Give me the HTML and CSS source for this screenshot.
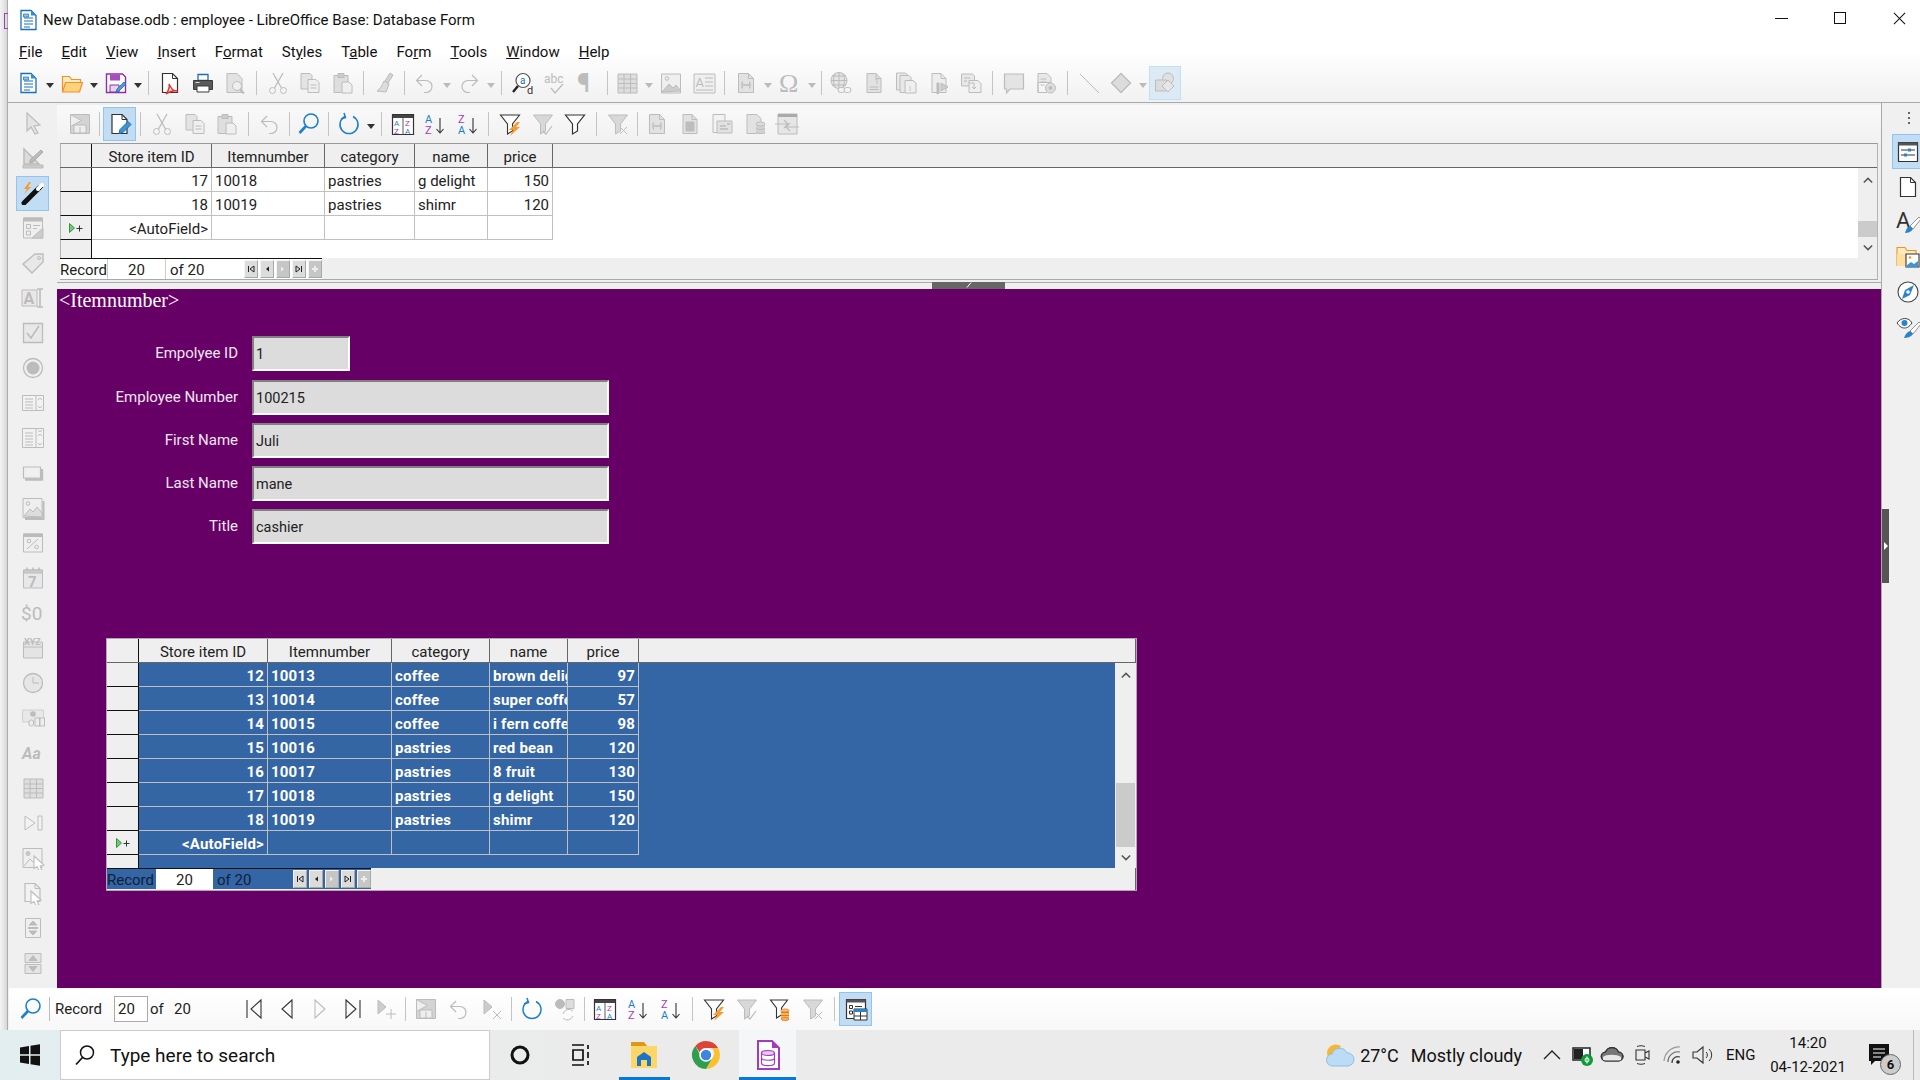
FILE: index.html
```html
<!DOCTYPE html>
<html lang="en">
<head>
  <meta charset="UTF-8" />
  <title>New Database.odb : employee - LibreOffice Base: Database Form</title>
  <link rel="stylesheet" href="styles.css">
</head>
<body>
  <svg class="sprite" xmlns="http://www.w3.org/2000/svg">
    <defs>
      <symbol id="i-new" viewBox="0 0 24 24"><path d="M5 2.500h10l5 5v14H5z" fill="#fff" stroke="#1b6fb5" stroke-width="1.3"/><path d="M15 2.500l5 5h-5z" fill="#2a8fd8" stroke="none"/><path d="M8 10h9M8 13h9M8 16h9M8 19h6" stroke="#1b6fb5"/><path d="M7.500 6h5v3h-5z" fill="#8fc4ee" stroke="#1b6fb5" stroke-width=".7"/></symbol>
      <symbol id="i-open" viewBox="0 0 24 24"><path d="M2.500 21V5.500h7l2 3h9V12" fill="#fdebc0" stroke="#f0922c" stroke-width="1.2"/><path d="M2.500 21l3-9.500h17l-3 9.500z" fill="#fdd27c" stroke="#f0922c" stroke-width="1.2"/></symbol>
      <symbol id="i-save" viewBox="0 0 24 24"><path d="M2.500 3h16l3 3v15.500h-19z" fill="#fff" stroke="#8e2ea8" stroke-width="1.4"/><path d="M6 3.500h10v6H6z" fill="#a84cc0" stroke="none"/><path d="M6 14h9v7H6z" fill="#e8d3ee" stroke="#8e2ea8"/><path d="M12 21l1-3 7-7 2 2-7 7z" fill="#4a9ad8" stroke="#1b6fb5" stroke-width=".8"/></symbol>
      <symbol id="i-pdf" viewBox="0 0 24 24"><path d="M4.500 2.500h10l5 5v14h-15z" fill="#fff" stroke="#333" stroke-width="1.2"/><path d="M14.500 2.500v5h5" stroke="#333"/><path d="M11 13c3 6 4 7 9 7-5-1-8 0-12 3 3-4 4-7 3-10z" fill="#fff" stroke="#e5322d" stroke-width="1.5"/></symbol>
      <symbol id="i-print" viewBox="0 0 24 24"><path d="M7 3.500h10v6H7z" fill="#fff" stroke="#1b6fb5" stroke-width="1.3"/><path d="M2.500 9.500h19v9h-19z" fill="#5a5a5a" stroke="#3a3a3a"/><path d="M6 15h12v6H6z" fill="#fff" stroke="#3a3a3a"/><path d="M4.500 11.500h4" stroke="#ddd"/></symbol>
      <symbol id="i-preview" viewBox="0 0 24 24"><path d="M4 2.500h10l5 5v14H4z" fill="#e2e2e2"/><circle cx="14" cy="15" r="4.500" fill="#eee"/><path d="M17 18.500l4 4" stroke-width="2"/></symbol>
      <symbol id="i-cut" viewBox="0 0 24 24"><path d="M7 2l8.500 15M17 2L8.500 17" stroke-width="1.3"/><circle cx="6.500" cy="19.500" r="3"/><circle cx="17.500" cy="19.500" r="3"/></symbol>
      <symbol id="i-copy" viewBox="0 0 24 24"><path d="M3 2.500h9l2 2V18H3z" fill="#e4e4e4"/><path d="M10 8.500h8l3 3v10H10z" fill="#efefef"/><path d="M12.500 14h6M12.500 17h6"/></symbol>
      <symbol id="i-paste" viewBox="0 0 24 24"><path d="M3 4.500h14v17H3z" fill="#dedede"/><path d="M7 2.500h6v4H7z" fill="#ccc"/><path d="M11 11h7l3 3v8H11z" fill="#efefef"/></symbol>
      <symbol id="i-clone" viewBox="0 0 24 24"><path d="M17 2l3 2-5 8-3-2z" fill="#d4d4d4"/><path d="M11 10l5 3-3 8-9-1c3-2 5-5 7-10z" fill="#dcdcdc"/></symbol>
      <symbol id="i-undo" viewBox="0 0 24 24"><path d="M9 4L3.500 9.500 9 15" stroke-width="1.2"/><path d="M4 9.500h9a6 6 0 0 1 0 12h-2" stroke-width="1.2"/></symbol>
      <symbol id="i-redo" viewBox="0 0 24 24"><path d="M15 4l5.500 5.500L15 15" stroke-width="1.2"/><path d="M20 9.500h-9a6 6 0 0 0 0 12h2" stroke-width="1.2"/></symbol>
      <symbol id="i-fr" viewBox="0 0 24 24"><circle cx="12" cy="9.500" r="7" fill="#fff" stroke="#555" stroke-width="1.2"/><path d="M7 15l-5 6" stroke="#222" stroke-width="2.400"/><text x="9" y="13" font-size="10" fill="#1b6fb5" stroke="none">a</text><text x="16" y="23" font-size="11" fill="#333" stroke="none">d</text></symbol>
      <symbol id="i-spell" viewBox="0 0 24 24"><text x="1" y="12" font-size="12" fill="currentColor" stroke="none">abc</text><path d="M8 17l4 5 8-9" stroke-width="1.300"/></symbol>
      <symbol id="i-para" viewBox="0 0 24 24"><text x="1" y="21" font-size="26" font-weight="bold" fill="currentColor" stroke="none">¶</text></symbol>
      <symbol id="i-table" viewBox="0 0 24 24"><path d="M3 3h19v19H3z" fill="#dedede"/><path d="M3 8h19M3 12.500h19M3 17h19M9 3v19M15.500 3v19"/></symbol>
      <symbol id="i-image" viewBox="0 0 24 24"><path d="M2.500 3h19v19h-19z" fill="#efefef"/><path d="M3 21l7-8 4 4 3-3 4 5v1z" fill="#ccc"/><circle cx="8" cy="7.500" r="1.800"/></symbol>
      <symbol id="i-text" viewBox="0 0 24 24"><path d="M2 3h21v19H2z" fill="#efefef"/><text x="3.500" y="16" font-size="13" fill="currentColor" stroke="none">A</text><path d="M13 7h8M13 11h8M13 15h8M4 19h17"/></symbol>
      <symbol id="i-field" viewBox="0 0 24 24"><path d="M4.500 2.500h10l5 5v14h-15z" fill="#e2e2e2"/><path d="M14.500 2.500v5h5"/><path d="M9 11c-1 0-1 1-1 3s0 3 1 3M15 11c1 0 1 1 1 3s0 3-1 3M9 14h6" stroke-width="1.400"/></symbol>
      <symbol id="i-omega" viewBox="0 0 24 24"><text x="1" y="21" font-size="26" fill="currentColor" stroke="none" font-family="Liberation Serif">Ω</text></symbol>
      <symbol id="i-link" viewBox="0 0 24 24"><circle cx="10" cy="9.500" r="8" fill="#e4e4e4"/><path d="M2 9.500h16M3 5h14M3 14h14M10 1.500v16M6 3c-2 4-2 9 0 13M14 3c2 4 2 9 0 13"/><rect x="9" y="16.500" width="7" height="5" rx="2.500" fill="#f4f4f4"/><rect x="15" y="16.500" width="7" height="5" rx="2.500" fill="#f4f4f4"/></symbol>
      <symbol id="i-foot" viewBox="0 0 24 24"><path d="M5 2.500h9l5 5v14H5z" fill="#e2e2e2"/><path d="M14 2.500v5h5M7.500 16h9M7.500 18.500h9"/><text x="12.500" y="13" font-size="8" fill="currentColor" stroke="none">1</text></symbol>
      <symbol id="i-end" viewBox="0 0 24 24"><path d="M2.500 2h9l2 2v15h-11z" fill="#e8e8e8"/><path d="M6 4.500h9l2 2v15H6z" fill="#e8e8e8"/><path d="M11 9.500h8l3 2.500v10H11z" fill="#efefef"/><text x="15" y="20" font-size="8" fill="currentColor" stroke="none">i</text></symbol>
      <symbol id="i-mark" viewBox="0 0 24 24"><path d="M5 2.500h9l5 5v14H5z" fill="#eee"/><path d="M14 2.500v5h5"/><path d="M10 12v11l2-1V12z" fill="#bbb"/><path d="M14 12l7 4-7 4z" fill="#ccc"/></symbol>
      <symbol id="i-xref" viewBox="0 0 24 24"><path d="M2.500 3h11l2 2v10h-13z" fill="#e8e8e8"/><path d="M10 9.500h9l3 3v9H10z" fill="#efefef"/><path d="M5 7h6M5 10h3M10 12h5v5M13 16l2 2 2-2"/></symbol>
      <symbol id="i-comment" viewBox="0 0 24 24"><path d="M2.500 3h19v15H8l-3.500 4v-4h-2z" fill="#e4e4e4" stroke-width="1.200"/></symbol>
      <symbol id="i-track" viewBox="0 0 24 24"><path d="M4 2.500h9l4 4v5H4v10" fill="#e8e8e8"/><path d="M4 2.500v19h9M6.500 8h6M6.500 11h6M6.500 14h4"/><circle cx="16.500" cy="17" r="5" fill="#ddd"/><circle cx="16.500" cy="17" r="1.500" fill="currentColor"/></symbol>
      <symbol id="i-line" viewBox="0 0 24 24"><path d="M3 3l19 19"/></symbol>
      <symbol id="i-diamond" viewBox="0 0 24 24"><path d="M12 2.500l9.500 9.500-9.500 9.500L2.500 12z" fill="#dcdcdc" stroke-width="1.300"/></symbol>
      <symbol id="i-shapes" viewBox="0 0 24 24"><circle cx="15" cy="7.500" r="5.500" fill="#e0e0e0"/><path d="M2.500 9h11v11h-11z" fill="#dcdcdc"/><path d="M15 9l6 6-6 6-6-6z" fill="#e6e6e6"/></symbol>

      <symbol id="i-savegrey" viewBox="0 0 24 24"><path d="M2.500 2.500h19v19h-19z" fill="#d4d4d4"/><path d="M6 13h12v8H6z" fill="#eee"/><path d="M2.500 2.500l11 6-11 6z" fill="#eee"/><path d="M12 15v6"/></symbol>
      <symbol id="i-edit" viewBox="0 0 24 24"><path d="M4 2.500h10l5 5v14H4z" fill="#fff" stroke="#333" stroke-width="1.200"/><path d="M14 2.500v5h5" stroke="#333"/><path d="M11 21.500l1-4 8-8 3 3-8 8z" fill="#3f94d8" stroke="#1b6fb5"/></symbol>
      <symbol id="i-find" viewBox="0 0 24 24"><circle cx="14" cy="9" r="7" stroke="#1b7fc9" stroke-width="1.600"/><path d="M9 14l-6.500 7" stroke="#1b7fc9" stroke-width="2.600"/></symbol>
      <symbol id="i-refresh" viewBox="0 0 24 24"><path d="M8 4.500a9 9 0 1 0 8 0" stroke="#1b7fc9" stroke-width="1.500"/><path d="M7 1l1.500 4.500L4 7" stroke="#1b7fc9" stroke-width="1.500"/></symbol>
      <symbol id="i-sortaz" viewBox="0 0 24 24"><path d="M1.500 2.500h21v20h-21z" fill="#fff" stroke="#333" stroke-width="1.200"/><path d="M2 3h20v3H2z" fill="#444" stroke="none"/><path d="M12 6v16" stroke="#333" stroke-width=".8"/><text x="3" y="14" font-size="8" fill="#1b7fc9" stroke="none">A</text><text x="3" y="21.500" font-size="8" fill="#a33bbf" stroke="none">Z</text><text x="14" y="14" font-size="8" fill="#a33bbf" stroke="none">Z</text><text x="14" y="21.500" font-size="8" fill="#1b7fc9" stroke="none">A</text></symbol>
      <symbol id="i-asc" viewBox="0 0 24 24"><text x="2" y="10.500" font-size="11" fill="#1b7fc9" stroke="none">A</text><text x="2" y="22" font-size="11" fill="#a33bbf" stroke="none">Z</text><path d="M17 6v15M13.500 17l3.500 4 3.500-4" stroke="#333" stroke-width="1.100"/></symbol>
      <symbol id="i-desc" viewBox="0 0 24 24"><text x="2" y="10.500" font-size="11" fill="#a33bbf" stroke="none">Z</text><text x="2" y="22" font-size="11" fill="#1b7fc9" stroke="none">A</text><path d="M17 6v15M13.500 17l3.500 4 3.500-4" stroke="#333" stroke-width="1.100"/></symbol>
      <symbol id="i-fauto" viewBox="0 0 24 24"><path d="M2.500 3h19l-7 9v7l-5 3V12z" fill="#fff" stroke="#333" stroke-width="1.100"/><path d="M19 10l-8 8h4l-3 6 10-9h-4l4-5z" fill="#f39c33" stroke="none"/></symbol>
      <symbol id="i-fapply" viewBox="0 0 24 24"><path d="M2.500 3h19l-7 9v7l-5 3V12z" fill="#d8d8d8"/><path d="M12 19l3 3 6-8" stroke-width="1.200"/></symbol>
      <symbol id="i-fform" viewBox="0 0 24 24"><path d="M2.500 3h19l-7 9v7l-5 3V12z" fill="#fff" stroke="#333" stroke-width="1.200"/></symbol>
      <symbol id="i-fremove" viewBox="0 0 24 24"><path d="M2.500 3h19l-7 9v7l-5 3V12z" fill="#d8d8d8"/><path d="M14 15l7 7M21 15l-7 7"/></symbol>
      <symbol id="i-fdb" viewBox="0 0 24 24"><path d="M2.500 3h17l-6 8v7l-5 3V11z" fill="#fff" stroke="#333" stroke-width="1.100"/><path d="M13 13h8v9h-8z" fill="#f8b560" stroke="none"/><path d="M13 15.500h8M13 18.500h8" stroke="#e07a1a"/><ellipse cx="17" cy="13.500" rx="4" ry="1.500" fill="#f8c57c" stroke="#e07a1a" stroke-width=".8"/><ellipse cx="17" cy="22" rx="4" ry="1.500" fill="#f8b560" stroke="#e07a1a" stroke-width=".8"/></symbol>
      <symbol id="i-frame" viewBox="0 0 24 24"><path d="M5 2.500h9l5 5v14H5z" fill="#e2e2e2"/><path d="M14 2.500v5h5"/><path d="M8 10h8v9H8z" fill="#bdbdbd"/></symbol>
      <symbol id="i-mail" viewBox="0 0 24 24"><path d="M3 2.500h12v18H3z" fill="#f2f2f2"/><path d="M7 9h15v12H7z" fill="#e2e2e2"/><path d="M10 14h6M10 17h8M17 12h3" stroke-width="1.300"/></symbol>
      <symbol id="i-dbdoc" viewBox="0 0 24 24"><path d="M4 2.500h10l4 4v15H4z" fill="#e2e2e2"/><path d="M13 12h9v10h-9z" fill="#d2d2d2" stroke="none"/><ellipse cx="17.500" cy="12" rx="4.500" ry="2" fill="#ddd"/><path d="M13 16c1 2 8 2 9 0M13 20c1 2 8 2 9 0"/></symbol>
      <symbol id="i-arrows" viewBox="0 0 24 24"><path d="M3 2h19v20H3z" fill="#e6e6e6"/><path d="M3 2h19v3H3z" fill="#aaa" stroke="none"/><path d="M0 12h13M9 8l4 4-4 4M24 15H11M15 11l-4 4 4 4" stroke-width="1.100"/></symbol>

      <symbol id="i-cursor" viewBox="0 0 24 24"><path d="M6 2l13 12-6 1 4 7-3 1-4-7-4 4z" fill="#e4e4e4" stroke-width="1.200"/></symbol>
      <symbol id="i-square" viewBox="0 0 24 24"><path d="M3 3v15l15 0z" fill="#dcdcdc" stroke-width="1.500"/><path d="M2 19h20v3H2z" fill="#ccc"/><path d="M9 14L20 4l2 2-10 10-3 1z" fill="#bbb" stroke="#aaa"/></symbol>
      <symbol id="i-wand" viewBox="0 0 24 24"><path d="M3 22l15-15" stroke="#111" stroke-width="5" stroke-linecap="round"/><path d="M17 8l4-4" stroke="#fff" stroke-width="4" stroke-linecap="round"/><path d="M19 9l3-3" stroke="#222" stroke-width="1"/><path d="M8 1L3 8h3l-3 5 7-7H7l3-5z" fill="#f39c33" stroke="none"/></symbol>
      <symbol id="i-fprops" viewBox="0 0 24 24"><path d="M2.500 2h19v20h-19z" fill="#efefef"/><path d="M2.500 2h19v3h-19z" fill="#bbb"/><path d="M5.500 8.500h4v4h-4zM5.500 15h4v4h-4zM12 9.500h7M12 12.500h4"/><path d="M22 12v10H11z" fill="#ccc"/></symbol>
      <symbol id="i-tag" viewBox="0 0 24 24"><path d="M2 13L14 3h8v8L11 22z" fill="#e8e8e8" stroke-width="1.400"/><circle cx="18" cy="7" r="1.500"/></symbol>
      <symbol id="i-label" viewBox="0 0 24 24"><path d="M1 4h15v16H1z" fill="#e8e8e8"/><text x="2.500" y="18" font-size="16" font-weight="bold" fill="currentColor" stroke="none">A</text><path d="M16 3h6M16 21h6M19 3v18" stroke-width="1.600"/></symbol>
      <symbol id="i-check" viewBox="0 0 24 24"><path d="M2.500 2.500h19v19h-19z" fill="#e8e8e8" stroke-width="1.300"/><path d="M6 12l4 5 8-12" stroke-width="1.600"/></symbol>
      <symbol id="i-radio" viewBox="0 0 24 24"><circle cx="12" cy="12" r="9.500" fill="#efefef" stroke-width="1.300"/><circle cx="12" cy="12" r="6.500" fill="currentColor" stroke="none"/></symbol>
      <symbol id="i-list" viewBox="0 0 24 24"><path d="M1.500 4.500h21v15h-21z" fill="#f2f2f2"/><path d="M15 4.500v15M4 8h8M4 11h8M4 14h8M4 17h8M17 9l2-2 2 2M17 15l2 2 2-2"/></symbol>
      <symbol id="i-combo" viewBox="0 0 24 24"><path d="M1.500 2.500h21v19h-21z" fill="#f2f2f2"/><path d="M15 2.500v19M4 7h8M4 10h8M4 13h8M4 16h8M4 19h8M17 4l2 2 2-2M17 10l2-2 2 2M17 17l2 2 2-2"/></symbol>
      <symbol id="i-button" viewBox="0 0 24 24"><path d="M2.500 6h17v11h-17z" fill="#f0f0f0" stroke-width="1.200"/><path d="M4 18.500h17V8" stroke-width="2.400"/></symbol>
      <symbol id="i-imgbtn" viewBox="0 0 24 24"><path d="M2 2.500h19v19H2z" fill="#efefef"/><path d="M3 20l6-7 3 3 4-5 5 6v4z" fill="#ddd"/><circle cx="7" cy="7.500" r="1.800"/><path d="M22.500 5v18H4" stroke-width="2"/></symbol>
      <symbol id="i-percent" viewBox="0 0 24 24"><path d="M2.500 3h19v18h-19z" fill="#efefef"/><path d="M2.500 3h19v2.500h-19z" fill="#bbb"/><path d="M6 18L17 8"/><circle cx="8" cy="10" r="1.800"/><circle cx="15.500" cy="16" r="1.800"/></symbol>
      <symbol id="i-date" viewBox="0 0 24 24"><path d="M2.500 4h19v18h-19z" fill="#e8e8e8"/><path d="M2.500 4h19v3h-19z" fill="#ccc"/><path d="M6 1.500v3M18 1.500v3M12 1.500v3" stroke-width="1.500"/><text x="7" y="20.500" font-size="15" font-weight="bold" fill="currentColor" stroke="none">7</text></symbol>
      <symbol id="i-dollar" viewBox="0 0 24 24"><text x="0" y="19" font-size="19" fill="currentColor" stroke="none">$0</text></symbol>
      <symbol id="i-xyz" viewBox="0 0 24 24"><path d="M2.500 6h19v16h-19z" fill="#e4e4e4"/><path d="M2.500 11h19"/><text x="3" y="9" font-size="9" font-weight="bold" fill="currentColor" stroke="none">XYZ</text></symbol>
      <symbol id="i-clock" viewBox="0 0 24 24"><circle cx="12" cy="12" r="9.500" fill="#e6e6e6" stroke-width="1.300"/><path d="M12 6v6h6"/></symbol>
      <symbol id="i-money" viewBox="0 0 24 24"><path d="M1.500 4h21v12h-21z" fill="#e8e8e8" stroke="#d0d0d0"/><circle cx="12" cy="8" r="2.800" fill="currentColor" stroke="none"/><rect x="8" y="14" width="4.500" height="6" rx="2" fill="#eee"/><rect x="14" y="12" width="4.500" height="8" fill="#eee"/><rect x="19" y="12" width="4.500" height="8" fill="#eee"/></symbol>
      <symbol id="i-aa" viewBox="0 0 24 24"><text x="1" y="18" font-size="16" font-style="italic" font-weight="bold" fill="currentColor" stroke="none">Aa</text></symbol>
      <symbol id="i-next" viewBox="0 0 24 24"><path d="M4 5l10 7-10 7zM17 5h4v14h-4z" fill="#f2f2f2"/></symbol>
      <symbol id="i-imgptr" viewBox="0 0 24 24"><path d="M2 2.500h19v19H2z" fill="#efefef"/><path d="M3 20l6-7 3 3 4-4" fill="none"/><circle cx="7" cy="7.500" r="2" fill="#ccc"/><path d="M13 10l10 9-4 1 2 4-3 .5-2-4-3 2z" fill="#fff" stroke-width="1.100"/></symbol>
      <symbol id="i-docptr" viewBox="0 0 24 24"><path d="M4 2.500h10l5 5v13H4z" fill="#f2f2f2" stroke-width="1.200"/><path d="M14 2.500v5h5"/><path d="M10 10l10 9-4 1 2 4-3 .5-2-4-3 2z" fill="#fff" stroke-width="1.100"/></symbol>
      <symbol id="i-spin" viewBox="0 0 24 24"><path d="M4.500 2.500h15v19h-15z" fill="#efefef"/><path d="M8 9l4-4 4 4zM8 15l4 4 4-4z" fill="currentColor"/><path d="M7 11.500h10M7 12.500h10"/></symbol>
      <symbol id="i-scroll" viewBox="0 0 24 24"><path d="M4 2.500h16v9H4zM4 13.500h16v9H4z" fill="#e4e4e4"/><path d="M8 9.500l4-5 4 5zM8 15.500l4 5 4-5z" fill="currentColor"/></symbol>

      <symbol id="i-props" viewBox="0 0 24 24"><path d="M2.500 2.500h19v19h-19z" fill="#fff" stroke="#333" stroke-width="1.200"/><path d="M2.500 2.500h19v3h-19z" fill="#555" stroke="none"/><path d="M5 10h14M5 15h14" stroke="#333"/><path d="M12 8.500h3v3h-3zM8 13.500h3v3H8z" fill="#2a84cc" stroke="none"/></symbol>
      <symbol id="i-page" viewBox="0 0 24 24"><path d="M4.500 2.500h10l5 5v14h-15z" fill="#fff" stroke="#333" stroke-width="1.200"/><path d="M14.500 2.500v5h5" stroke="#333"/></symbol>
      <symbol id="i-style" viewBox="0 0 24 24"><text x="0" y="18" font-size="22" fill="#333" stroke="none">A</text><path d="M14 16L23 7l2 2-8 10z" fill="#fff" stroke="#777" stroke-width=".8"/><path d="M9 23c3 0 6-1 8-4l-3-3c-3 1-4 4-5 7z" fill="#2a84cc" stroke="none"/></symbol>
      <symbol id="i-gallery" viewBox="0 0 24 24"><path d="M1 21V2.500h8l2 3h9V9" fill="#fdebc0" stroke="#f0922c" stroke-width="1.100"/><path d="M1 21V9h10v12z" fill="#fde0a0" stroke="none"/><path d="M10 9h13v13H10z" fill="#fff" stroke="#333" stroke-width="1.100"/><path d="M10 21l5-4 3 2 4-3v6H10z" fill="#3f94d8" stroke="none"/><circle cx="14" cy="12.500" r="1.300" fill="#f0922c" stroke="none"/></symbol>
      <symbol id="i-nav" viewBox="0 0 24 24"><circle cx="12" cy="12" r="10" fill="#fff" stroke="#444" stroke-width="1.100"/><path d="M18 5l-4 10-8 4 3-9z" fill="#2a84cc" stroke="none"/><circle cx="12" cy="12" r="1.800" fill="#fff" stroke="none"/></symbol>
      <symbol id="i-inspect" viewBox="0 0 24 24"><path d="M1 8c4-6 12-6 15 0-3 4-5 5-7.500 5S4 12 1 8z" fill="#fff" stroke="#444"/><circle cx="8.500" cy="8" r="3" fill="#2a84cc" stroke="none"/><path d="M14 16l9-9 2 2-8 10z" fill="#fff" stroke="#777" stroke-width=".8"/><path d="M8 23c3 0 7-1 9-4l-3-3c-3 1-5 4-6 7z" fill="#2a84cc" stroke="none"/></symbol>

      <symbol id="i-first" viewBox="0 0 24 24"><path d="M5 3v18M19 3L9 12l10 9z" stroke="#333" stroke-width="1.100"/></symbol>
      <symbol id="i-prev" viewBox="0 0 24 24"><path d="M17 3L7 12l10 9z" stroke="#333" stroke-width="1.100"/></symbol>
      <symbol id="i-nxt" viewBox="0 0 24 24"><path d="M7 3l10 9-10 9z" stroke-width="1.100"/></symbol>
      <symbol id="i-last" viewBox="0 0 24 24"><path d="M19 3v18M5 3l10 9-10 9z" stroke="#333" stroke-width="1.100"/></symbol>
      <symbol id="i-addrec" viewBox="0 0 24 24"><path d="M4 3l8 7-8 7z" fill="#ccc"/><path d="M17 12v10M12 17h10"/></symbol>
      <symbol id="i-delrec" viewBox="0 0 24 24"><path d="M4 3l8 7-8 7z" fill="#ccc"/><path d="M13 14l8 8M21 14l-8 8"/></symbol>
      <symbol id="i-reset" viewBox="0 0 24 24"><circle cx="7" cy="7" r="4.500" fill="#bbb"/><path d="M13 2.500h8v9h-8z" fill="#ddd"/><path d="M10 17a6 6 0 0 1 10-3M20 19a6 6 0 0 1-10 2"/></symbol>
      <symbol id="i-fview" viewBox="0 0 24 24"><path d="M2.500 2.500h19v19h-19z" fill="#fff" stroke="#333" stroke-width="1.200"/><path d="M2.500 2.500h19v3h-19z" fill="#555" stroke="none"/><path d="M5.500 8.500h3v3h-3zM5.500 14h3v3h-3zM11 9.500h7" stroke="#333"/><path d="M10 12h13v11H10z" fill="#fff" stroke="#333"/><path d="M10 12h13v3H10z" fill="#2a84cc" stroke="none"/><path d="M10 19h13M16.500 15v8" stroke="#333"/></symbol>
      <symbol id="i-rowadd" viewBox="0 0 16 12"><path d="M1.500 1.500l5 4.500-5 4.500z" fill="#7bc47f" stroke="#2d9a3a"/><path d="M11.500 3.500v6M8.500 6.500h6" stroke="#333"/></symbol>
      <symbol id="i-chevup" viewBox="0 0 12 8"><path d="M1 6.500l5-5 5 5" stroke="#555" stroke-width="1.800"/></symbol>
      <symbol id="i-chevdn" viewBox="0 0 12 8"><path d="M1 1.500l5 5 5-5" stroke="#555" stroke-width="1.800"/></symbol>

      <symbol id="i-ring" viewBox="0 0 24 24"><circle cx="12" cy="12" r="8" stroke="#111" stroke-width="3"/></symbol>
      <symbol id="i-tasks" viewBox="0 0 24 24"><path d="M4 2h12M4 22h12M5 7h10v10H5zM20 2v4M20 9v6M20 18v4" stroke="#111" stroke-width="1.700"/></symbol>
      <symbol id="i-win" viewBox="0 0 24 24"><path d="M2 4.500l9-1.500v8.300H2zM12.500 2.800L22 1.300v10h-9.500zM2 12.700h9V21l-9-1.400zM12.500 12.700H22v10l-9.500-1.500z" fill="#111" stroke="none"/></symbol>
      <symbol id="i-search" viewBox="0 0 24 24"><circle cx="14" cy="9.500" r="6.500" stroke="#111" stroke-width="1.500"/><path d="M9.500 14.500l-6.500 7" stroke="#111" stroke-width="1.700"/></symbol>
      <symbol id="i-explorer" viewBox="0 0 32 32"><path d="M3 3h13l3 4h10v22H3z" fill="#fcd767" stroke="none"/><path d="M3 3h13l3 4H3z" fill="#d99a1c" stroke="none"/><path d="M9 27V18l7-5 7 5v9h-4v-6h-6v6z" fill="#1b74c4" stroke="none"/></symbol>
      <symbol id="i-chrome" viewBox="0 0 32 32"><path d="M16 2a14 14 0 0 1 12.100 7H16a7 7 0 0 0-6.400 4.300L5.400 6.900A14 14 0 0 1 16 2z" fill="#dd4437" stroke="none"/><path d="M28.100 9A14 14 0 0 1 16 30l6-10.500A7 7 0 0 0 21.800 9z" fill="#fbc02d" stroke="none"/><path d="M16 30A14 14 0 0 1 5.400 6.900l5.800 11.200A7 7 0 0 0 22 19.500z" fill="#2e9e4f" stroke="none"/><circle cx="16" cy="16" r="6" fill="#3d85e0" stroke="#fff" stroke-width="1.600"/></symbol>
      <symbol id="i-base" viewBox="0 0 32 32"><path d="M6 2h14l7 7v21H6z" fill="#fff" stroke="#a33bbf" stroke-width="2"/><path d="M20 2l7 7h-7z" fill="#a33bbf" stroke="none"/><ellipse cx="16" cy="14" rx="6.500" ry="2.500" fill="#e6c7ef" stroke="#a33bbf" stroke-width="1.200"/><path d="M9.500 14v10c0 3.500 13 3.500 13 0V14M9.500 19c0 3 13 3 13 0" stroke="#a33bbf" stroke-width="1.200"/></symbol>
      <symbol id="i-weather" viewBox="0 0 32 32"><path d="M3 14a9 9 0 0 1 14-7l-8 12H4z" fill="#f7b733" stroke="none"/><path d="M9 27a6 6 0 0 1-1-12 8 8 0 0 1 15-1 6.500 6.500 0 0 1 1 13z" fill="#bcdcf5" stroke="#8bbfe6"/></symbol>
      <symbol id="i-caret" viewBox="0 0 24 24"><path d="M4 16l8-8 8 8" stroke="#222" stroke-width="1.300"/></symbol>
      <symbol id="i-batt" viewBox="0 0 24 24"><path d="M3 5h17v12H3z" fill="#fff" stroke="#222" stroke-width="1.500"/><path d="M4 6h9v10H4z" fill="#222" stroke="none"/><circle cx="17" cy="17" r="6" fill="#0e9b38" stroke="none"/><path d="M17 13.500v7M15 17a2 2 0 0 1 4 0 2 2 0 0 1-4 0z" stroke="#fff" stroke-width="1"/></symbol>
      <symbol id="i-cloud" viewBox="0 0 24 24"><path d="M6 18a4.500 4.500 0 0 1-.5-9 7 7 0 0 1 13 0 4.500 4.500 0 0 1 0 9z" fill="#777" stroke="#333"/><path d="M3 14c3-3 14-3 18 0v4H3z" fill="#e8e8e8" stroke="none"/><path d="M6 18a4.500 4.500 0 0 1-.5-9 7 7 0 0 1 13 0 4.500 4.500 0 0 1 0 9z" stroke="#333" stroke-width="1.200"/></symbol>
      <symbol id="i-cam" viewBox="0 0 24 24"><path d="M6 7h9v10H6zM15 10l4-2v8l-4-2z" stroke="#333" stroke-width="1.100"/><path d="M7 3.500c3-1 5-1 8 0M7 20.500c3 1 5 1 8 0" stroke="#333"/></symbol>
      <symbol id="i-wifi" viewBox="0 0 24 24"><path d="M4 18A15 15 0 0 1 20 4" stroke="#999" stroke-width="1.200"/><path d="M8 19a10 10 0 0 1 12-10" stroke="#666" stroke-width="1.200"/><path d="M12 20a6 6 0 0 1 8-6" stroke="#444" stroke-width="1.200"/><circle cx="18" cy="19" r="1.800" fill="#222" stroke="none"/></symbol>
      <symbol id="i-vol" viewBox="0 0 24 24"><path d="M3 9h4l6-5v16l-6-5H3z" stroke="#333" stroke-width="1.100"/><path d="M16 9a4 4 0 0 1 0 6M19 6a8 8 0 0 1 0 12" stroke="#333"/></symbol>
      <symbol id="i-note" viewBox="0 0 24 24"><path d="M2 1h20v17H8l-4 4v-4H2z" fill="#111" stroke="none"/><path d="M6 6h12M6 10h12M6 14h8" stroke="#fff"/></symbol>
    </defs>
  </svg>

  <div class="behind"><span class="behind-glyph"></span></div>

  <div class="window">
    <div class="head">
      <div class="titlebar">
        <svg class="ic app-ic"><use href="#i-new"/></svg>
        <span class="title">New Database.odb : employee - LibreOffice Base: Database Form</span>
        <div class="winbtns">
          <span class="wb wb-min"></span>
          <span class="wb wb-max"></span>
          <svg class="wb-close" viewBox="0 0 14 14"><path d="M1 1l12 12M13 1L1 13" stroke="#111" stroke-width="1.100"/></svg>
        </div>
      </div>
      <div class="menubar">
        <span><u>F</u>ile</span><span><u>E</u>dit</span><span><u>V</u>iew</span><span><u>I</u>nsert</span><span>F<u>o</u>rmat</span><span>St<u>y</u>les</span><span>T<u>a</u>ble</span><span>Fo<u>r</u>m</span><span><u>T</u>ools</span><span><u>W</u>indow</span><span><u>H</u>elp</span>
      </div>
      <div class="toolbar tb-main">
        <span class="btn"><svg class="ic"><use href="#i-new"/></svg></span><span class="dd on"></span>
        <span class="btn"><svg class="ic"><use href="#i-open"/></svg></span><span class="dd on"></span>
        <span class="btn"><svg class="ic"><use href="#i-save"/></svg></span><span class="dd on"></span>
        <span class="sep wide"></span>
        <span class="btn"><svg class="ic"><use href="#i-pdf"/></svg></span>
        <span class="btn"><svg class="ic"><use href="#i-print"/></svg></span>
        <span class="btn"><svg class="ic"><use href="#i-preview"/></svg></span>
        <span class="sep wide"></span>
        <span class="btn"><svg class="ic"><use href="#i-cut"/></svg></span>
        <span class="btn"><svg class="ic"><use href="#i-copy"/></svg></span>
        <span class="btn"><svg class="ic"><use href="#i-paste"/></svg></span>
        <span class="sep wide"></span>
        <span class="btn"><svg class="ic"><use href="#i-clone"/></svg></span>
        <span class="sep"></span>
        <span class="btn"><svg class="ic"><use href="#i-undo"/></svg></span><span class="dd"></span>
        <span class="btn"><svg class="ic"><use href="#i-redo"/></svg></span><span class="dd"></span>
        <span class="sep wide"></span>
        <span class="btn"><svg class="ic"><use href="#i-fr"/></svg></span>
        <span class="btn"><svg class="ic"><use href="#i-spell"/></svg></span>
        <span class="btn"><svg class="ic"><use href="#i-para"/></svg></span>
        <span class="sep"></span>
        <span class="btn"><svg class="ic"><use href="#i-table"/></svg></span><span class="dd"></span>
        <span class="btn"><svg class="ic"><use href="#i-image"/></svg></span>
        <span class="btn"><svg class="ic"><use href="#i-text"/></svg></span>
        <span class="sep wide"></span>
        <span class="btn"><svg class="ic"><use href="#i-field"/></svg></span><span class="dd"></span>
        <span class="btn"><svg class="ic"><use href="#i-omega"/></svg></span><span class="dd"></span>
        <span class="sep"></span>
        <span class="btn"><svg class="ic"><use href="#i-link"/></svg></span>
        <span class="btn"><svg class="ic"><use href="#i-foot"/></svg></span>
        <span class="btn"><svg class="ic"><use href="#i-end"/></svg></span>
        <span class="btn"><svg class="ic"><use href="#i-mark"/></svg></span>
        <span class="btn"><svg class="ic"><use href="#i-xref"/></svg></span>
        <span class="sep wide"></span>
        <span class="btn"><svg class="ic"><use href="#i-comment"/></svg></span>
        <span class="btn"><svg class="ic"><use href="#i-track"/></svg></span>
        <span class="sep wide"></span>
        <span class="btn"><svg class="ic"><use href="#i-line"/></svg></span>
        <span class="btn"><svg class="ic"><use href="#i-diamond"/></svg></span><span class="dd"></span>
        <span class="btn hl-soft"><svg class="ic"><use href="#i-shapes"/></svg></span>
      </div>
    </div>

    <div class="middle">
      <div class="leftbar">
        <span class="side"><svg class="ic"><use href="#i-cursor"/></svg></span>
        <span class="side"><svg class="ic"><use href="#i-square"/></svg></span>
        <span class="side hl"><svg class="ic"><use href="#i-wand"/></svg></span>
        <span class="side"><svg class="ic"><use href="#i-fprops"/></svg></span>
        <span class="side"><svg class="ic"><use href="#i-tag"/></svg></span>
        <span class="side"><svg class="ic"><use href="#i-label"/></svg></span>
        <span class="side"><svg class="ic"><use href="#i-check"/></svg></span>
        <span class="side"><svg class="ic"><use href="#i-radio"/></svg></span>
        <span class="side"><svg class="ic"><use href="#i-list"/></svg></span>
        <span class="side"><svg class="ic"><use href="#i-combo"/></svg></span>
        <span class="side"><svg class="ic"><use href="#i-button"/></svg></span>
        <span class="side"><svg class="ic"><use href="#i-imgbtn"/></svg></span>
        <span class="side"><svg class="ic"><use href="#i-percent"/></svg></span>
        <span class="side"><svg class="ic"><use href="#i-date"/></svg></span>
        <span class="side"><svg class="ic"><use href="#i-dollar"/></svg></span>
        <span class="side"><svg class="ic"><use href="#i-xyz"/></svg></span>
        <span class="side"><svg class="ic"><use href="#i-clock"/></svg></span>
        <span class="side"><svg class="ic"><use href="#i-money"/></svg></span>
        <span class="side"><svg class="ic"><use href="#i-aa"/></svg></span>
        <span class="side"><svg class="ic"><use href="#i-table"/></svg></span>
        <span class="side"><svg class="ic"><use href="#i-next"/></svg></span>
        <span class="side"><svg class="ic"><use href="#i-imgptr"/></svg></span>
        <span class="side"><svg class="ic"><use href="#i-docptr"/></svg></span>
        <span class="side"><svg class="ic"><use href="#i-spin"/></svg></span>
        <span class="side"><svg class="ic"><use href="#i-scroll"/></svg></span>
      </div>

      <div class="content">
        <div class="toolbar tb-form">
          <span class="btn"><svg class="ic"><use href="#i-savegrey"/></svg></span>
          <span class="sep"></span>
          <span class="btn hl"><svg class="ic"><use href="#i-edit"/></svg></span>
          <span class="sep wide"></span>
          <span class="btn"><svg class="ic"><use href="#i-cut"/></svg></span>
          <span class="btn"><svg class="ic"><use href="#i-copy"/></svg></span>
          <span class="btn"><svg class="ic"><use href="#i-paste"/></svg></span>
          <span class="sep wide"></span>
          <span class="btn"><svg class="ic"><use href="#i-undo"/></svg></span>
          <span class="sep"></span>
          <span class="btn"><svg class="ic"><use href="#i-find"/></svg></span>
          <span class="sep"></span>
          <span class="btn"><svg class="ic"><use href="#i-refresh"/></svg></span><span class="dd on"></span>
          <span class="sep wide"></span>
          <span class="btn"><svg class="ic"><use href="#i-sortaz"/></svg></span>
          <span class="btn"><svg class="ic"><use href="#i-asc"/></svg></span>
          <span class="btn"><svg class="ic"><use href="#i-desc"/></svg></span>
          <span class="sep wide"></span>
          <span class="btn"><svg class="ic"><use href="#i-fauto"/></svg></span>
          <span class="btn"><svg class="ic"><use href="#i-fapply"/></svg></span>
          <span class="btn"><svg class="ic"><use href="#i-fform"/></svg></span>
          <span class="sep wide"></span>
          <span class="btn"><svg class="ic"><use href="#i-fremove"/></svg></span>
          <span class="sep"></span>
          <span class="btn"><svg class="ic"><use href="#i-field"/></svg></span>
          <span class="btn"><svg class="ic"><use href="#i-frame"/></svg></span>
          <span class="btn"><svg class="ic"><use href="#i-mail"/></svg></span>
          <span class="btn"><svg class="ic"><use href="#i-dbdoc"/></svg></span>
          <span class="btn"><svg class="ic"><use href="#i-arrows"/></svg></span>
        </div>

        <div class="grid grid-top">
          <div class="ghead">
            <span class="rh"></span><span class="th c1">Store item ID</span><span class="th c2">Itemnumber</span><span class="th c3">category</span><span class="th c4">name</span><span class="th c5">price</span>
          </div>
          <div class="gbody">
            <div class="grows">
              <div class="grow"><span class="rh"></span><span class="td c1 num">17</span><span class="td c2">10018</span><span class="td c3">pastries</span><span class="td c4">g delight</span><span class="td c5 num">150</span></div>
              <div class="grow"><span class="rh"></span><span class="td c1 num">18</span><span class="td c2">10019</span><span class="td c3">pastries</span><span class="td c4">shimr</span><span class="td c5 num">120</span></div>
              <div class="grow"><span class="rh"><svg class="rowadd"><use href="#i-rowadd"/></svg></span><span class="td c1 num">&lt;AutoField&gt;</span><span class="td c2"></span><span class="td c3"></span><span class="td c4"></span><span class="td c5"></span></div>
              <div class="grow tail"><span class="rh"></span></div>
            </div>
            <div class="vscroll">
              <span class="sc-up"><svg class="chev"><use href="#i-chevup"/></svg></span>
              <span class="sc-track"></span>
              <span class="sc-thumb"></span>
              <span class="sc-dn"><svg class="chev"><use href="#i-chevdn"/></svg></span>
            </div>
          </div>
          <div class="gbar">
            <div class="gbar-fill">
              <span class="rec-label">Record</span><span class="rec-input">20</span><span class="rec-of">of 20</span>
              <span class="nav-btns">
                <span class="nb"><svg viewBox="0 0 8 8"><path d="M1.500 1v6M7 1L3 4l4 3z" stroke="#222"/></svg></span>
                <span class="nb"><svg viewBox="0 0 8 8"><path d="M6 1.500L3 4l3 2.500z" fill="#222"/></svg></span>
                <span class="nb off"><svg viewBox="0 0 8 8"><path d="M2 1.500L5 4 2 6.500z" fill="#eee"/></svg></span>
                <span class="nb"><svg viewBox="0 0 8 8"><path d="M6.500 1v6M1 1l4 3-4 3z" stroke="#222"/></svg></span>
                <span class="nb off"><svg viewBox="0 0 8 8"><path d="M4 1v6M1 4h6" stroke="#eee" stroke-width="2"/></svg></span>
              </span>
            </div>
          </div>
        </div>

        <div class="splitter"><span class="split-handle"><svg viewBox="0 0 8 6"><path d="M2 5.500L6 .5" stroke="#fff"/></svg></span></div>

        <div class="form">
          <div class="caption">&lt;Itemnumber&gt;</div>
          <div class="field first"><label>Empolyee ID</label><span class="input short">1</span></div>
          <div class="field"><label>Employee Number</label><span class="input">100215</span></div>
          <div class="field"><label>First Name</label><span class="input">Juli</span></div>
          <div class="field"><label>Last Name</label><span class="input">mane</span></div>
          <div class="field"><label>Title</label><span class="input">cashier</span></div>

          <div class="grid grid-sub">
            <div class="ghead">
              <span class="rh"></span><span class="th c1">Store item ID</span><span class="th c2">Itemnumber</span><span class="th c3">category</span><span class="th c4">name</span><span class="th c5">price</span>
            </div>
            <div class="gbody">
              <div class="grows">
                <div class="grow"><span class="rh"></span><span class="td c1 num">12</span><span class="td c2">10013</span><span class="td c3">coffee</span><span class="td c4">brown delight</span><span class="td c5 num">97</span></div>
                <div class="grow"><span class="rh"></span><span class="td c1 num">13</span><span class="td c2">10014</span><span class="td c3">coffee</span><span class="td c4">super coffee</span><span class="td c5 num">57</span></div>
                <div class="grow"><span class="rh"></span><span class="td c1 num">14</span><span class="td c2">10015</span><span class="td c3">coffee</span><span class="td c4">i fern coffee</span><span class="td c5 num">98</span></div>
                <div class="grow"><span class="rh"></span><span class="td c1 num">15</span><span class="td c2">10016</span><span class="td c3">pastries</span><span class="td c4">red bean</span><span class="td c5 num">120</span></div>
                <div class="grow"><span class="rh"></span><span class="td c1 num">16</span><span class="td c2">10017</span><span class="td c3">pastries</span><span class="td c4">8 fruit</span><span class="td c5 num">130</span></div>
                <div class="grow"><span class="rh"></span><span class="td c1 num">17</span><span class="td c2">10018</span><span class="td c3">pastries</span><span class="td c4">g delight</span><span class="td c5 num">150</span></div>
                <div class="grow"><span class="rh"></span><span class="td c1 num">18</span><span class="td c2">10019</span><span class="td c3">pastries</span><span class="td c4">shimr</span><span class="td c5 num">120</span></div>
                <div class="grow"><span class="rh"><svg class="rowadd"><use href="#i-rowadd"/></svg></span><span class="td c1 num">&lt;AutoField&gt;</span><span class="td c2"></span><span class="td c3"></span><span class="td c4"></span><span class="td c5"></span></div>
                <div class="grow tail"><span class="rh"></span></div>
              </div>
              <div class="vscroll">
                <span class="sc-up"><svg class="chev"><use href="#i-chevup"/></svg></span>
                <span class="sc-track"></span>
                <span class="sc-thumb"></span>
                <span class="sc-dn"><svg class="chev"><use href="#i-chevdn"/></svg></span>
              </div>
            </div>
            <div class="gbar">
              <div class="gbar-fill">
                <span class="rec-label">Record</span><span class="rec-input">20</span><span class="rec-of">of 20</span>
                <span class="nav-btns">
                  <span class="nb"><svg viewBox="0 0 8 8"><path d="M1.500 1v6M7 1L3 4l4 3z" stroke="#222"/></svg></span>
                  <span class="nb"><svg viewBox="0 0 8 8"><path d="M6 1.500L3 4l3 2.500z" fill="#222"/></svg></span>
                  <span class="nb off"><svg viewBox="0 0 8 8"><path d="M2 1.500L5 4 2 6.500z" fill="#eee"/></svg></span>
                  <span class="nb"><svg viewBox="0 0 8 8"><path d="M6.500 1v6M1 1l4 3-4 3z" stroke="#222"/></svg></span>
                  <span class="nb off"><svg viewBox="0 0 8 8"><path d="M4 1v6M1 4h6" stroke="#eee" stroke-width="2"/></svg></span>
                </span>
              </div>
            </div>
          </div>
        </div>
      </div>

      <div class="rightbar">
        <span class="dots"></span>
        <span class="rside hl"><svg class="ic"><use href="#i-props"/></svg></span>
        <span class="rside"><svg class="ic"><use href="#i-page"/></svg></span>
        <span class="rside"><svg class="ic"><use href="#i-style"/></svg></span>
        <span class="rside"><svg class="ic"><use href="#i-gallery"/></svg></span>
        <span class="rside"><svg class="ic"><use href="#i-nav"/></svg></span>
        <span class="rside"><svg class="ic"><use href="#i-inspect"/></svg></span>
        <span class="collapse"></span>
      </div>
    </div>

    <div class="toolbar findbar">
      <span class="btn"><svg class="ic"><use href="#i-find"/></svg></span>
      <span class="fb-sep"></span>
      <span class="fb-record">Record</span>
      <span class="fb-input">20</span>
      <span class="fb-of">of</span>
      <span class="fb-total">20</span>
      <span class="btn"><svg class="ic"><use href="#i-first"/></svg></span>
      <span class="btn"><svg class="ic"><use href="#i-prev"/></svg></span>
      <span class="btn"><svg class="ic"><use href="#i-nxt"/></svg></span>
      <span class="btn"><svg class="ic"><use href="#i-last"/></svg></span>
      <span class="btn"><svg class="ic"><use href="#i-addrec"/></svg></span>
      <span class="sep"></span>
      <span class="btn"><svg class="ic"><use href="#i-savegrey"/></svg></span>
      <span class="btn"><svg class="ic"><use href="#i-undo"/></svg></span>
      <span class="btn"><svg class="ic"><use href="#i-delrec"/></svg></span>
      <span class="sep"></span>
      <span class="btn"><svg class="ic"><use href="#i-refresh"/></svg></span>
      <span class="btn"><svg class="ic"><use href="#i-reset"/></svg></span>
      <span class="sep"></span>
      <span class="btn"><svg class="ic"><use href="#i-sortaz"/></svg></span>
      <span class="btn"><svg class="ic"><use href="#i-asc"/></svg></span>
      <span class="btn"><svg class="ic"><use href="#i-desc"/></svg></span>
      <span class="sep wide"></span>
      <span class="btn"><svg class="ic"><use href="#i-fauto"/></svg></span>
      <span class="btn"><svg class="ic"><use href="#i-fapply"/></svg></span>
      <span class="btn"><svg class="ic"><use href="#i-fdb"/></svg></span>
      <span class="btn"><svg class="ic"><use href="#i-fremove"/></svg></span>
      <span class="sep wide"></span>
      <span class="btn hl"><svg class="ic"><use href="#i-fview"/></svg></span>
    </div>
  </div>

  <div class="taskbar">
    <span class="start"><svg class="tk-ic"><use href="#i-win"/></svg></span>
    <div class="search"><svg class="tk-ic"><use href="#i-search"/></svg><span>Type here to search</span></div>
    <span class="slot"><svg class="tk-ic"><use href="#i-ring"/></svg></span>
    <span class="slot"><svg class="tk-ic"><use href="#i-tasks"/></svg></span>
    <span class="slot pinned running"><svg class="tk-app"><use href="#i-explorer"/></svg></span>
    <span class="slot pinned"><svg class="tk-app"><use href="#i-chrome"/></svg></span>
    <span class="slot running active"><svg class="tk-app"><use href="#i-base"/></svg></span>
    <div class="tray">
      <svg class="tk-app"><use href="#i-weather"/></svg>
      <span class="temp">27°C</span>
      <span class="sky">Mostly cloudy</span>
      <span class="tr"><svg class="tk-ic"><use href="#i-caret"/></svg></span>
      <span class="tr"><svg class="tk-ic"><use href="#i-batt"/></svg></span>
      <span class="tr"><svg class="tk-ic"><use href="#i-cloud"/></svg></span>
      <span class="tr"><svg class="tk-ic"><use href="#i-cam"/></svg></span>
      <span class="tr"><svg class="tk-ic"><use href="#i-wifi"/></svg></span>
      <span class="tr"><svg class="tk-ic"><use href="#i-vol"/></svg></span>
      <span class="lang">ENG</span>
      <span class="clock"><span>14:20</span><span>04-12-2021</span></span>
      <span class="notes"><svg class="tk-ic"><use href="#i-note"/></svg><span class="badge">6</span></span>
    </div>
  </div>
</body>
</html>
```

FILE: styles.css
```css
* {
  box-sizing: border-box;
}
body {
  margin: 0;
  width: 1920px;
  height: 1080px;
  overflow: hidden;
  position: relative;
  font-family: Roboto, "Liberation Sans", sans-serif;
  font-size: 15px;
  color: #222;
  background: #f0f0f0;
  display: grid;
  grid-template-columns: 8px 1fr;
  grid-template-rows: 1030px 50px;
}
.sprite {
  position: absolute;
  width: 0;
  height: 0;
}
.ic {
  width: 24px;
  height: 24px;
  color: #bcbcbc;
  fill: none;
  stroke: currentColor;
  flex: none;
  overflow: visible;
}

/* window behind */
.behind {
  position: relative;
  background: linear-gradient(90deg, #f4f4f4, #d8d8d8);
  border-right: 1px solid #aaa;
}
.behind-glyph {
  position: absolute;
  top: 13px;
  left: 4px;
  width: 4px;
  height: 16px;
  border: 1px solid #a33bbf;
  border-right: 0;
}

/* main window */
.window {
  display: flex;
  flex-direction: column;
  min-width: 0;
}
.head {
  height: 103px;
  background: linear-gradient(#fff 50%, #f1f1f1);
  border-bottom: 1px solid #aaa;
}
.titlebar {
  height: 40px;
  padding-left: 8px;
  display: flex;
  align-items: center;
  color: #111;
}
.app-ic {
  width: 24px;
  height: 24px;
}
.title {
  margin-left: 3px;
  font-size: 15px;
}
.winbtns {
  margin-left: auto;
  display: flex;
  align-items: center;
  padding: 0 14px 4px 0;
}
.wb {
  display: block;
}
.wb-min {
  width: 13px;
  height: 1px;
  background: #111;
  margin-right: 46px;
}
.wb-max {
  width: 12px;
  height: 12px;
  border: 1px solid #111;
  margin-right: 47px;
}
.wb-close {
  width: 13px;
  height: 13px;
}
.menubar {
  height: 24px;
  padding-left: 11px;
  display: flex;
  align-items: center;
  gap: 19px;
  color: #111;
}
.toolbar {
  display: flex;
  align-items: center;
}
.tb-main {
  height: 38px;
  padding-left: 3.75px;
}
.btn {
  width: 32.5px;
  height: 34px;
  flex: none;
  display: flex;
  align-items: center;
  justify-content: center;
}
.btn.hl, .side.hl, .rside.hl {
  background: #c1dcf3;
  outline: 1px solid #90c5f2;
  outline-offset: -1px;
}
.hl-soft {
  background: #dceaf6;
  outline: 1px solid #c2dff6;
  outline-offset: -1px;
}
.dd {
  width: 11.5px;
  flex: none;
  display: flex;
  justify-content: center;
}
.dd::after {
  content: "";
  border: 4px solid transparent;
  border-top: 5px solid #bbb;
  border-bottom: 0;
  margin-top: 4px;
}
.dd.on::after {
  border-top-color: #333;
}
.sep {
  width: 7px;
  height: 24px;
  flex: none;
  display: flex;
  justify-content: center;
}
.sep.wide {
  width: 10px;
}
.sep::after {
  content: "";
  width: 1px;
  background: #c4c4c4;
}

.middle {
  flex: 1;
  display: flex;
  min-height: 0;
}

/* left form controls bar */
.leftbar {
  width: 49px;
  flex: none;
  padding: 2.5px 0 0 8px;
  background: #f0f0f0;
  display: flex;
  flex-direction: column;
}
.side {
  width: 33px;
  height: 35px;
  flex: none;
  display: flex;
  align-items: center;
  justify-content: center;
}
.content {
  flex: 1;
  min-width: 0;
  display: flex;
  flex-direction: column;
  background: #efefef;
}
.tb-form {
  height: 38px;
  margin-top: 2px;
  padding-left: 6.75px;
  background: linear-gradient(#f9f9f9, #f1f1f1);
}

/* data grids */
.grid {
  display: flex;
  flex-direction: column;
  background: #efefef;
}
.ghead, .grow {
  display: flex;
  height: 24px;
  flex: none;
}
.ghead {
  border-bottom: 1px solid #666;
}
.rh {
  flex: none;
  background: #efefef;
  border-right: 1px solid #111;
  border-bottom: 1px solid #111;
  display: flex;
  align-items: center;
  justify-content: center;
}
.ghead .rh {
  border-bottom: 0;
}
.grow.tail {
  flex: 1;
  height: auto;
}
.grow.tail .rh {
  border-bottom: 0;
}
.th, .td {
  flex: none;
  overflow: hidden;
  white-space: nowrap;
  line-height: 26px;
}
.th {
  text-align: center;
  border-right: 1px solid #666;
  color: #222;
}
.td {
  padding: 0 3px;
  border-right: 1px solid #c0c0c0;
  border-bottom: 1px solid #c0c0c0;
}
.td.num {
  text-align: right;
}
.rowadd {
  width: 16px;
  height: 12px;
  fill: none;
}
.gbody {
  flex: 1;
  min-height: 0;
  display: flex;
}
.grows {
  flex: 1;
  min-width: 0;
  display: flex;
  flex-direction: column;
}
.vscroll {
  flex: none;
  background: #efefef;
  display: flex;
  flex-direction: column;
}
.sc-up, .sc-dn {
  flex: none;
  display: flex;
  align-items: center;
  justify-content: center;
}
.sc-up {
  height: 24px;
}
.sc-dn {
  height: 21px;
}
.sc-track {
  flex: 1;
}
.sc-thumb {
  flex: none;
  background: #cbcbcb;
}
.chev {
  width: 10px;
  height: 7px;
  fill: none;
}
.gbar {
  height: 21px;
  flex: none;
  display: flex;
}
.gbar-fill {
  display: flex;
  align-items: center;
  border-top: 1px solid #111;
  white-space: nowrap;
}
.rec-label, .rec-input, .rec-of {
  align-self: stretch;
  line-height: 17px;
  padding-top: 3px;
}
.rec-input {
  text-align: center;
  background: #fff;
}
.nav-btns {
  display: flex;
  margin-left: auto;
  gap: 2px;
}
.nb {
  width: 14px;
  height: 18px;
  background: #dcdcdc;
  border: 1px solid #a8a8a8;
  border-top-color: #f4f4f4;
  border-left-color: #f4f4f4;
  display: flex;
  align-items: center;
  justify-content: center;
}
.nb svg {
  width: 8px;
  height: 8px;
  fill: none;
}
.nb.off {
  background: #c6c6c6;
}

/* upper grid */
.grid-top {
  height: 137px;
  margin-left: 3px;
  margin-right: 3px;
  border-top: 1px solid #999;
  border-right: 1px solid #b4b4b4;
  border-bottom: 1px solid #aaa;
}
.grid-top .rh {
  width: 32px;
  border-left: 1px solid #b4b4b4;
}
.grid-top .c1 { width: 120px; }
.grid-top .c2 { width: 113px; }
.grid-top .c3 { width: 90px; }
.grid-top .c4 { width: 73px; }
.grid-top .c5 { width: 65px; }
.grid-top .grows {
  background: #fff;
}
.grid-top .td {
  color: #222;
}
.grid-top .vscroll {
  width: 19px;
}
.grid-top .sc-thumb {
  height: 16px;
}
.grid-top .gbar-fill {
  width: 262px;
  background: #fff;
}
.grid-top .rec-label {
  width: 48px;
  border-right: 1px solid #ccc;
}
.grid-top .rec-input {
  width: 57px;
}
.grid-top .rec-of {
  padding-left: 4px;
  border-left: 1px solid #ccc;
}
.splitter {
  height: 9px;
  border-top: 2px solid #efefef;
  box-shadow: inset 0 1px 0 #aaa;
  display: flex;
  justify-content: flex-end;
  padding-right: 876px;
}
.split-handle {
  width: 73px;
  height: 7px;
  background: #666;
  display: flex;
  justify-content: center;
}
.split-handle svg {
  width: 8px;
  height: 6px;
}

/* form */
.form {
  flex: 1;
  background: #660066;
  padding-left: 2px;
}
.caption {
  height: 23px;
  line-height: 23px;
  font-family: "Liberation Serif", serif;
  font-size: 20px;
  color: #fff;
  margin-bottom: 24px;
}
.field {
  display: flex;
  align-items: center;
  height: 35px;
  margin-bottom: 8px;
}
.field.first {
  margin-bottom: 9px;
}
.field label {
  width: 179px;
  text-align: right;
  color: #f2e6f2;
  padding-bottom: 2px;
}
.input {
  margin-left: 14px;
  width: 357px;
  height: 35px;
  padding: 5px 0 0 2px;
  background: #dcdcdc;
  color: #222;
  border: 2px solid #fff;
  border-top-color: #808080;
  border-left-color: #808080;
  line-height: 24px;
  font-size: 14.5px;
}
.input.short {
  width: 98px;
}

/* lower grid */
.grid-sub {
  width: 1031px;
  height: 253px;
  margin: 94px 0 0 47px;
  border: 1px solid #b4a4b4;
  box-shadow: inset -1px 0 0 #666;
}
.grid-sub .rh {
  width: 32px;
}
.grid-sub .c1 { width: 129px; }
.grid-sub .c2 { width: 124px; }
.grid-sub .c3 { width: 98px; }
.grid-sub .c4 { width: 78px; }
.grid-sub .c5 { width: 71px; }
.grid-sub .grows {
  background: #3465a4;
}
.grid-sub .td {
  color: #fff;
  font-weight: 700;
  letter-spacing: .2px;
}
.grid-sub .vscroll {
  width: 21px;
}
.grid-sub .sc-thumb {
  height: 64px;
  margin: 0 1px;
}
.grid-sub .gbar {
  margin-bottom: 1px;
}
.grid-sub .gbar-fill {
  width: 264px;
  background: #3465a4;
  color: #10203c;
}
.grid-sub .rec-label {
  width: 49px;
}
.grid-sub .rec-input {
  width: 57px;
  color: #222;
}
.grid-sub .rec-of {
  padding-left: 4px;
}

/* right deck */
.rightbar {
  width: 39px;
  flex: none;
  position: relative;
  border-left: 1px solid #aaa;
  padding: 31px 0 0 10px;
  background: #f0f0f0;
  display: flex;
  flex-direction: column;
  overflow: hidden;
}
.rside {
  width: 35px;
  height: 35px;
  flex: none;
  padding-left: 4px;
  display: flex;
  align-items: center;
}
.dots {
  position: absolute;
  top: 9px;
  left: 26px;
  width: 2px;
  height: 2px;
  background: #666;
  box-shadow: 0 5px 0 #666, 0 10px 0 #666;
}
.collapse {
  position: absolute;
  top: 406px;
  left: 0;
  width: 7px;
  height: 74px;
  background: #555;
}
.collapse::after {
  content: "";
  position: absolute;
  top: 33px;
  left: 2px;
  border: 4px solid transparent;
  border-left: 4px solid #fff;
  border-right: 0;
}

/* bottom find bar */
.findbar {
  height: 42px;
  flex: none;
  padding-left: 5px;
  background: linear-gradient(#fff, #f8f8f8);
  margin-left: 1px;
}
.findbar .btn {
  width: 33px;
}
.fb-sep {
  width: 1px;
  height: 24px;
  background: #bbb;
  margin-left: 2px;
}
.fb-record {
  margin-left: 5px;
  width: 59px;
}
.fb-input {
  width: 34px;
  height: 26px;
  line-height: 24px;
  padding-left: 3px;
  border: 1px solid #aaa;
  background: #fff;
}
.fb-of {
  margin-left: 2px;
  width: 24px;
}
.fb-total {
  width: 63px;
}

/* taskbar */
.taskbar {
  grid-column: 1 / 3;
  display: flex;
  align-items: center;
  background: linear-gradient(90deg, #e3eef1, #ebebeb 30%);
  color: #111;
}
.start {
  width: 60px;
  display: flex;
  justify-content: center;
}
.tk-ic {
  width: 24px;
  height: 24px;
  fill: none;
  flex: none;
}
.tk-app {
  width: 32px;
  height: 32px;
  fill: none;
  flex: none;
}
.search {
  width: 430px;
  height: 50px;
  padding-left: 12px;
  display: flex;
  align-items: center;
  gap: 13px;
  background: #fff;
  border: 1px solid #ccc;
  font-size: 19px;
}
.slot {
  width: 60px;
  height: 50px;
  flex: none;
  position: relative;
  display: flex;
  align-items: center;
  justify-content: center;
}
.slot.pinned {
  width: 62px;
}
.slot.running::after {
  content: "";
  position: absolute;
  left: 6px;
  right: 5px;
  bottom: 0;
  height: 3px;
  background: #0a78d4;
}
.slot.pinned.running {
  margin-left: 3px;
}
.slot.active {
  width: 57px;
  margin-left: 2px;
  background: #f4f6f8;
}
.slot.active::after {
  left: 0;
  right: 0;
}
.tray {
  margin-left: auto;
  height: 50px;
  display: flex;
  align-items: center;
  padding-right: 20px;
  position: relative;
}
.tray::after {
  content: "";
  position: absolute;
  right: 6px;
  top: 0;
  bottom: 0;
  width: 1px;
  background: #bbb;
}
.temp {
  margin-left: 4px;
  font-size: 18px;
}
.sky {
  margin-left: 12px;
  font-size: 18px;
  margin-right: 15px;
}
.tr {
  width: 30px;
  display: flex;
  justify-content: center;
}
.lang {
  margin-left: 9px;
  width: 32px;
}
.clock {
  width: 100px;
  display: flex;
  flex-direction: column;
  align-items: center;
  gap: 4px;
  line-height: 20px;
}
.notes {
  width: 42px;
  height: 50px;
  position: relative;
  display: flex;
  align-items: center;
  justify-content: center;
}
.badge {
  position: absolute;
  top: 24px;
  left: 22px;
  width: 21px;
  height: 21px;
  border-radius: 50%;
  border: 1px solid #666;
  background: #ccc;
  font-size: 13px;
  font-weight: 700;
  line-height: 19px;
  text-align: center;
}
```
